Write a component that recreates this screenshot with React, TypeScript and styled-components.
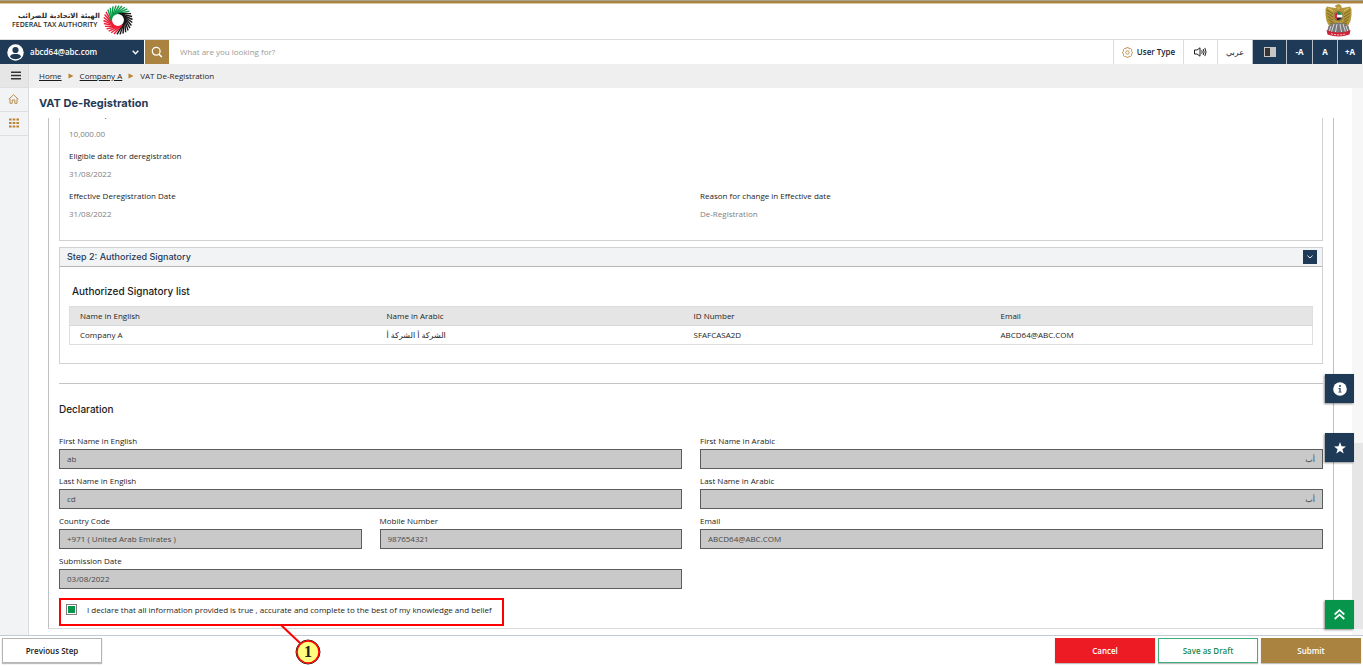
import React from 'react';
import styled, { createGlobalStyle } from 'styled-components';

const navy = '#1f3a57';
const gold = '#ab8340';
const green = '#06954b';

const Global = createGlobalStyle`
  * { box-sizing: border-box; }
  body { margin: 0; background: #fff; color: #1c1c1c; font: 500 8px/12px 'Open Sans', 'DejaVu Sans', sans-serif; }
  button, input { font: inherit; color: inherit; margin: 0; border-radius: 0; }
  button { border: 0; padding: 0; cursor: pointer; }
  a { color: inherit; }
  h1, h2, h3, p, dl, dd { margin: 0; }
  h1, h2, h3 { font-family: Inter, sans-serif; }
`;

const Shell = styled.div`
  display: flex;
  flex-direction: column;
  height: 100vh;
`;

const Stripe = styled.div`
  height: 4px;
  flex: none;
  border-top: 1px solid #a9a391;
  border-bottom: 1px solid #d9c7a4;
  background: ${gold};
`;

const Brand = styled.header`
  flex: none;
  height: 35px;
  display: flex;
  justify-content: space-between;
  align-items: center;
  padding: 0 11px 3px 12px;
`;

const Authority = styled.div`
  display: flex;
  align-items: center;
  gap: 3px;
`;

const AuthorityName = styled.div`
  width: 88px;
  white-space: nowrap;
  font-size: 7px;
  font-weight: 600;
  line-height: 8px;
  color: #2b2b2b;
`;

const AuthorityArabic = styled.div`
  font: 700 7px/9px 'DejaVu Sans', sans-serif;
  text-align: right;
`;

const Toolbar = styled.div`
  flex: none;
  height: 25px;
  display: flex;
  border-top: 1px solid #dcdcdc;
  padding-right: 1px;
`;

const Account = styled.button`
  width: 144px;
  display: flex;
  align-items: center;
  gap: 6px;
  padding: 0 5px 0 7px;
  background: ${navy};
  color: #fff;
  font-weight: 600;
  span { flex: 1; text-align: left; }
`;

const SearchButton = styled.button`
  width: 24px;
  margin-left: 1px;
  display: grid;
  place-items: center;
  background: ${gold};
`;

const SearchBox = styled.input`
  flex: 1;
  min-width: 0;
  border: 0;
  padding: 0 11px;
  outline: 0;
  &::placeholder { color: #999; opacity: 1; }
`;

const Tool = styled.button<{ $width: number; $dark?: boolean; $light?: boolean }>`
  width: ${p => p.$width}px;
  display: flex;
  align-items: center;
  justify-content: center;
  gap: 4px;
  border-left: 1px solid ${p => (p.$dark ? '#b9c0c9' : '#dcdcdc')};
  background: ${p => (p.$dark ? navy : '#fff')};
  color: ${p => (p.$dark ? '#fff' : '#1c2430')};
  font-weight: ${p => (p.$dark ? 700 : p.$light ? 400 : 600)};
`;

const Body = styled.div`
  flex: 1;
  min-height: 0;
  display: flex;
`;

const Rail = styled.nav`
  flex: none;
  width: 29px;
  background: #f2f3f5;
  border-right: 1px solid #dcdcdc;
`;

const RailButton = styled.button<{ $menu?: boolean }>`
  display: grid;
  place-items: center;
  width: 100%;
  height: 24px;
  padding: ${p => (p.$menu ? '0 0 1px 3px' : '0 1px 1px 0')};
  background: ${p => (p.$menu ? '#e6e6e6' : 'transparent')};
  border-bottom: 1px solid #dedfe1;
`;

const Column = styled.div`
  flex: 1;
  min-width: 0;
  display: flex;
  flex-direction: column;
`;

const Crumbs = styled.nav`
  flex: none;
  height: 24px;
  display: flex;
  align-items: center;
  gap: 6px;
  padding-left: 10px;
  background: #efefef;
`;

const Work = styled.div`
  flex: 1;
  min-height: 0;
  display: flex;
`;

const Main = styled.main`
  position: relative;
  flex: 1;
  min-width: 0;
  display: flex;
  flex-direction: column;
  padding: 0 18px 6px 19px;
`;

const PageTitle = styled.h1`
  flex: none;
  height: 30px;
  margin-left: -9px;
  font-size: 11px;
  line-height: 30px;
  font-weight: 700;
  color: ${navy};
`;

const Pane = styled.div`
  flex: 1;
  min-height: 0;
  overflow-y: auto;
  scrollbar-width: none;
`;

const Frame = styled.div`
  border: 1px solid #c0c0c0;
  border-top: 0;
  border-bottom-color: #d8dadc;
  padding: 0 10px 2px;
`;

const Track = styled.div`
  flex: none;
  width: 11px;
  height: 100%;
  display: flex;
  align-items: flex-end;
  background: #f7f7f7;
`;

const Thumb = styled.div`
  width: 100%;
  height: 34%;
  margin-bottom: 6px;
  background: #e6e6e6;
`;

const Panel = styled.section`
  border: 1px solid #cfd1d3;
`;

const Summary = styled(Panel)`
  border-top: 0;
  padding: 0 9px 20px;
  overflow: hidden;
`;

const Pair = styled.dl`
  display: grid;
  grid-template-columns: 1fr 1fr;
  column-gap: 18px;
  margin-top: 10px;
`;

const Fact = styled.div<{ $cut?: boolean }>`
  margin-top: ${p => (p.$cut ? -20 : 0)}px;
  dd { margin-top: ${p => (p.$cut ? 8 : 6)}px; color: #808080; }
`;

const StepPanel = styled(Panel)`
  margin-top: 6px;
`;

const StepHead = styled.div`
  display: flex;
  align-items: center;
  justify-content: space-between;
  height: 19px;
  padding: 0 5px 0 7px;
  background: #f2f3f5;
  border-bottom: 1px solid #b4b6b8;
  h2 { font-size: 9px; font-weight: 500; color: ${navy}; }
`;

const Toggle = styled.button`
  display: grid;
  place-items: center;
  width: 14px;
  height: 14px;
  background: ${navy};
`;

const StepBody = styled.div`
  padding: 16px 9px 18px;
`;

const Heading = styled.h3<{ $inset?: boolean }>`
  font-size: 10px;
  line-height: 16px;
  font-weight: 500;
  padding-left: ${p => (p.$inset ? 3 : 0)}px;
`;

const Signatories = styled.table`
  width: 100%;
  margin-top: 7px;
  table-layout: fixed;
  border-collapse: collapse;
  border: 1px solid #dcdfe2;
  th, td { height: 19px; padding: 0 0 0 10px; text-align: left; font-weight: 500; }
  th { background: #e5e5e5; border-bottom: 1px solid #d5d9de; }
  th:not(:last-child) { width: 24.7%; }
`;

const Rule = styled.hr`
  height: 1px;
  margin: 19px 0 17px;
  border: 0;
  background: #c4c4c4;
`;

const Form = styled.form`
  display: grid;
  grid-template-columns: repeat(4, 1fr);
  gap: 6px 18px;
  margin-top: 18px;
`;

const Field = styled.label<{ $span: number }>`
  grid-column: span ${p => p.$span};
  display: flex;
  flex-direction: column;
  gap: 2px;
  input {
    width: 100%;
    height: 20px;
    padding: 0 7px 1px;
    border: 1px solid #5c5c5c;
    background: #c9c9c9;
    color: #484848;
    outline: 0;
  }
`;

const Consent = styled.label`
  display: flex;
  align-items: center;
  gap: 10px;
  width: 445px;
  max-width: 100%;
  height: 28px;
  margin-top: 9px;
  padding: 0 5px 5px;
  border: 2px solid #f00;
  white-space: nowrap;
  input {
    flex: none;
    appearance: none;
    width: 11px;
    height: 11px;
    border: 1px solid #7d7d7d;
    padding: 1px;
    background: ${green} content-box;
  }
`;

const Callout = styled.svg`
  position: absolute;
  z-index: 5;
  left: 251px;
  bottom: -30px;
`;

const Dock = styled.div<{ $bottom: number }>`
  position: fixed;
  z-index: 4;
  right: 9px;
  bottom: ${p => p.$bottom}px;
  display: flex;
  flex-direction: column;
  gap: 30px;
`;

const DockButton = styled.button<{ $color: string }>`
  display: grid;
  place-items: center;
  width: 29px;
  height: 29px;
  background: ${p => p.$color};
  box-shadow: -1px 1px 2px rgba(0, 0, 0, 0.45);
`;

const Footer = styled.footer`
  flex: none;
  display: flex;
  gap: 3px;
  padding: 2px 2px 3px;
  border-top: 1px solid #c3cbd2;
`;

const Action = styled.button<{ $fill: string; $ink: string; $line: string }>`
  width: 100px;
  height: 25px;
  background: ${p => p.$fill};
  color: ${p => p.$ink};
  border: 1px solid ${p => p.$line};
  font-weight: 600;
  box-shadow: 0 1px 1px rgba(0, 0, 0, 0.25);
  &:first-child { margin-right: auto; }
`;

const Swirl = () => {
  const strands = Array.from({ length: 30 }, (_, i) => {
    const a = (i / 30) * 360;
    const point = (deg: number, r: number) => [15 + r * Math.cos((deg * Math.PI) / 180), 15 + r * Math.sin((deg * Math.PI) / 180)];
    const [x1, y1] = point(a, 6.5);
    const [x2, y2] = point(a + 58, 14.5);
    const color = a < 45 || a >= 275 ? '#161616' : a < 160 ? '#ee1c35' : '#0a9a4a';
    return <line key={i} x1={x1} y1={y1} x2={x2} y2={y2} stroke={color} strokeWidth="1.4" />;
  });
  return <svg width="30" height="30" viewBox="0 0 30 30" aria-hidden="true">{strands}</svg>;
};

const Emblem = () => (
  <svg width="27" height="33" viewBox="0 0 27 33" aria-hidden="true">
    <path d="M11 1 L14 0 L16 1.500 L17 4 L20 3.500 L25 2.500 L26.500 5 L26.500 11 L25.500 17 L23.500 21 L19 24 L8 24 L3.500 21 L1.500 17 L0.500 11 L0.500 5 L2 2.500 L7 3.500 L10.500 4 L11.500 3 L9.500 2.500 Z" fill="#b3973a" />
    <path d="M2 6 L8 10 M2 9 L8 13 M2.500 12 L8 16 M3.500 15.500 L9 19 M5 19 L10 21 M25 6 L19 10 M25 9 L19 13 M24.500 12 L19 16 M23.500 15.500 L18 19 M22 19 L17 21" stroke="#6f5d25" strokeWidth="0.800" />
    <path d="M3 4 L8 7 M24 4 L19 7 M12 4 L15 4" stroke="#dcc670" strokeWidth="1" />
    <path d="M9 19 L18 19 L23.500 22 L25 28 L19 31 L8 31 L2 28 L3.500 22 Z" fill="#77777a" />
    <path d="M6 22 L4 28 M9 20 L6.500 28 M12 20 L10.500 28 M15 20 L16.500 28 M18 20 L20.500 28 M21 22 L23 28" stroke="#e4e4e4" strokeWidth="0.900" />
    <circle cx="13.500" cy="12" r="4.800" fill="#6f5d25" />
    <circle cx="13.500" cy="12" r="4" fill="#fff" />
    <path d="M10.500 9.300 A4 4 0 0 1 16.500 9.300 L17.200 10.800 L10 10.800 Z" fill="#16834a" />
    <path d="M10 13.400 L17.200 13.400 A4 4 0 0 1 11.500 15.500 Z" fill="#222" />
    <path d="M9.500 12 A4 4 0 0 1 12 8.300 V15.700 A4 4 0 0 1 9.500 12 Z" fill="#da2437" />
    <path d="M1.500 26 Q13.500 31 25.500 26 L24.500 30.500 Q13.500 34.500 2.500 30.500 Z" fill="#cf2336" />
    <path d="M6 29.800 Q13.500 32 21 29.800" stroke="#f0c9cc" strokeWidth="1" fill="none" strokeDasharray="2 1" />
  </svg>
);

const Arrow = () => (
  <svg width="6" height="6" viewBox="0 0 6 6" aria-hidden="true"><path d="M0.500 0.500 L5.500 3 L0.500 5.500 Z" fill="#b9822f" /></svg>
);

const InputField = ({ label, value, span, rtl }: { label: string; value: string; span: number; rtl?: boolean }) => (
  <Field $span={span}>
    {label}
    <input readOnly value={value} dir={rtl ? 'rtl' : 'ltr'} />
  </Field>
);

export default function App() {
  return (
    <Shell>
      <Global />
      <Stripe />
      <Brand>
        <Authority>
          <AuthorityName>
            <AuthorityArabic lang="ar" dir="rtl">الهيئة الاتحادية للضرائب</AuthorityArabic>
            FEDERAL TAX AUTHORITY
          </AuthorityName>
          <Swirl />
        </Authority>
        <Emblem />
      </Brand>

      <Toolbar>
        <Account>
          <svg width="17" height="17" viewBox="0 0 17 17" aria-hidden="true">
            <circle cx="8.500" cy="8.500" r="8.200" fill="#fff" />
            <circle cx="8.500" cy="6" r="3.100" fill={navy} />
            <path d="M3 12.800 C3.500 10.300 6 10 8.500 10 C11 10 13.500 10.300 14 12.800 C12.500 14.600 10.500 15.200 8.500 15.200 C6.500 15.200 4.500 14.600 3 12.800 Z" fill={navy} />
          </svg>
          <span>abcd64@abc.com</span>
          <svg width="7" height="5" viewBox="0 0 7 5" fill="none" stroke="#fff" strokeWidth="1.400" aria-hidden="true"><path d="M0.700 0.800 L3.500 3.700 L6.300 0.800" /></svg>
        </Account>
        <SearchButton aria-label="Search">
          <svg width="12" height="12" viewBox="0 0 12 12" fill="none" stroke="#fff" strokeWidth="1.200" aria-hidden="true">
            <circle cx="5.200" cy="5.200" r="3.900" /><path d="M8 8.200 L10.800 11" strokeWidth="1.600" />
          </svg>
        </SearchButton>
        <SearchBox placeholder="What are you looking for?" aria-label="Search the portal" />
        <Tool $width={70}>
          <svg width="11" height="11" viewBox="0 0 11 11" fill="none" stroke="#b98d4c" strokeWidth="0.900" aria-hidden="true">
            <path d="M4.500 0.600 H6.500 L7 1.800 L8.600 1.400 L9.800 2.800 L9.300 4.200 L10.400 5 V6.200 L9.300 6.900 L9.700 8.300 L8.400 9.600 L7 9.200 L6.400 10.400 H4.600 L4 9.200 L2.600 9.600 L1.300 8.300 L1.700 6.900 L0.600 6.200 V5 L1.700 4.200 L1.300 2.800 L2.500 1.400 L4 1.800 Z" />
            <circle cx="5.500" cy="5.500" r="1.700" />
          </svg>
          User Type
        </Tool>
        <Tool $width={34} aria-label="Read aloud">
          <svg width="13" height="10" viewBox="0 0 13 10" fill="none" stroke="#222" strokeWidth="1" aria-hidden="true">
            <path d="M0.500 3 H3 L6 0.800 V9.200 L3 7 H0.500 Z" />
            <path d="M7.700 3.300 Q8.700 5 7.700 6.700 M9.200 2 Q11 5 9.200 8 M10.800 0.900 Q13.300 5 10.800 9.100" />
          </svg>
        </Tool>
        <Tool $width={35} $light lang="ar">عربي</Tool>
        <Tool $width={34} $dark aria-label="Contrast">
          <svg width="12" height="10" viewBox="0 0 12 10" aria-hidden="true"><path d="M0 0 H12 V10 H0 Z" fill="#c6c6c6" /><path d="M1 1 H6 V9 H1 Z" fill="#3a3431" /></svg>
        </Tool>
        <Tool $width={26} $dark>-A</Tool>
        <Tool $width={25} $dark>A</Tool>
        <Tool $width={25} $dark>+A</Tool>
      </Toolbar>

      <Body>
        <Rail>
          <RailButton $menu aria-label="Menu">
            <svg width="10" height="9" viewBox="0 0 10 9" stroke="#333" strokeWidth="1.500" aria-hidden="true"><path d="M0 1.200 H10 M0 4.500 H10 M0 7.800 H10" /></svg>
          </RailButton>
          <RailButton aria-label="Home">
            <svg width="11" height="10" viewBox="0 0 11 10" fill="none" stroke="#b98d4c" strokeWidth="1" aria-hidden="true">
              <path d="M0.700 5.200 L5.500 0.800 L10.300 5.200 M2 4.600 V9.300 H4.200 V6 H6.800 V9.300 H9 V4.600" />
            </svg>
          </RailButton>
          <RailButton aria-label="Services">
            <svg width="10" height="10" viewBox="0 0 10 10" stroke="#b98437" strokeWidth="2" strokeDasharray="2.600 1.100" aria-hidden="true"><path d="M0 1.500 H10 M0 5 H10 M0 8.500 H10" /></svg>
          </RailButton>
        </Rail>

        <Column>
          <Crumbs>
            <a href="#home">Home</a>
            <Arrow />
            <a href="#company">Company A</a>
            <Arrow />
            <span>VAT De-Registration</span>
          </Crumbs>
          <Work>
            <Main>
              <PageTitle>VAT De-Registration</PageTitle>
              <Pane>
                <Frame>
                  <Summary>
                    <Pair>
                      <Fact $cut><dt>Value for period in last statement</dt><dd>10,000.00</dd></Fact>
                    </Pair>
                    <Pair>
                      <Fact><dt>Eligible date for deregistration</dt><dd>31/08/2022</dd></Fact>
                    </Pair>
                    <Pair>
                      <Fact><dt>Effective Deregistration Date</dt><dd>31/08/2022</dd></Fact>
                      <Fact><dt>Reason for change in Effective date</dt><dd>De-Registration</dd></Fact>
                    </Pair>
                  </Summary>

                  <StepPanel>
                    <StepHead>
                      <h2>Step 2: Authorized Signatory</h2>
                      <Toggle aria-label="Collapse step 2">
                        <svg width="6" height="4" viewBox="0 0 6 4" fill="none" stroke="#fff" strokeWidth="0.900" aria-hidden="true"><path d="M0.400 0.600 L3 3 L5.600 0.600" /></svg>
                      </Toggle>
                    </StepHead>
                    <StepBody>
                      <Heading $inset>Authorized Signatory list</Heading>
                      <Signatories>
                        <thead>
                          <tr><th>Name in English</th><th>Name in Arabic</th><th>ID Number</th><th>Email</th></tr>
                        </thead>
                        <tbody>
                          <tr><td>Company A</td><td lang="ar"><bdi dir="rtl">الشركة أ الشركة أ</bdi></td><td>SFAFCASA2D</td><td>ABCD64@ABC.COM</td></tr>
                        </tbody>
                      </Signatories>
                    </StepBody>
                  </StepPanel>

                  <Rule />
                  <Heading>Declaration</Heading>
                  <Form>
                    <InputField span={2} label="First Name in English" value="ab" />
                    <InputField span={2} label="First Name in Arabic" value="أب" rtl />
                    <InputField span={2} label="Last Name in English" value="cd" />
                    <InputField span={2} label="Last Name in Arabic" value="أب" rtl />
                    <InputField span={1} label="Country Code" value="+971 ( United Arab Emirates )" />
                    <InputField span={1} label="Mobile Number" value="987654321" />
                    <InputField span={2} label="Email" value="ABCD64@ABC.COM" />
                    <InputField span={2} label="Submission Date" value="03/08/2022" />
                  </Form>
                  <Consent>
                    <input type="checkbox" defaultChecked />
                    I declare that all information provided is true , accurate and complete to the best of my knowledge and belief
                  </Consent>
                </Frame>
              </Pane>
              <Callout width="44" height="40" viewBox="0 0 44 40">
                <path d="M1 0 L20 18" stroke="#f00" strokeWidth="2" />
                <circle cx="28" cy="27" r="12" fill="#ffff80" stroke="#222" strokeWidth="1" />
                <circle cx="28" cy="27" r="11" fill="none" stroke="#f00" strokeWidth="1.500" />
                <text x="28" y="32" textAnchor="middle" fontFamily="Liberation Serif, serif" fontWeight="700" fontSize="16" fill="#222">1</text>
              </Callout>
            </Main>
            <Track><Thumb /></Track>
          </Work>
        </Column>
      </Body>

      <Footer>
        <Action $fill="#fff" $ink="#1c1c1c" $line="#b5b5b5">Previous Step</Action>
        <Action $fill="#ed1c24" $ink="#fff" $line="#ed1c24">Cancel</Action>
        <Action $fill="#fff" $ink="#1d8a53" $line="#3fae78">Save as Draft</Action>
        <Action $fill={gold} $ink="#fff" $line={gold}>Submit</Action>
      </Footer>

      <Dock $bottom={204}>
        <DockButton $color={navy} aria-label="Information">
          <svg width="14" height="14" viewBox="0 0 14 14" aria-hidden="true">
            <circle cx="7" cy="7" r="6.800" fill="#fff" />
            <circle cx="7" cy="4" r="1" fill={navy} />
            <path d="M5.500 6 H7.600 V9.700 H8.600 V10.600 H5.400 V9.700 H6.400 V6.900 H5.500 Z" fill={navy} />
          </svg>
        </DockButton>
        <DockButton $color={navy} aria-label="Favourites">
          <svg width="12" height="12" viewBox="0 0 12 12" aria-hidden="true"><path d="M6 0 L7.500 4.300 L12 4.400 L8.400 7.200 L9.700 11.600 L6 9 L2.300 11.600 L3.600 7.200 L0 4.400 L4.500 4.300 Z" fill="#fff" /></svg>
        </DockButton>
      </Dock>
      <Dock $bottom={37}>
        <DockButton $color={green} aria-label="Back to top">
          <svg width="11" height="11" viewBox="0 0 11 11" fill="none" stroke="#fff" strokeWidth="1.700" aria-hidden="true"><path d="M0.700 5.500 L5.500 1.200 L10.300 5.500 M0.700 10 L5.500 5.700 L10.300 10" /></svg>
        </DockButton>
      </Dock>
    </Shell>
  );
}
